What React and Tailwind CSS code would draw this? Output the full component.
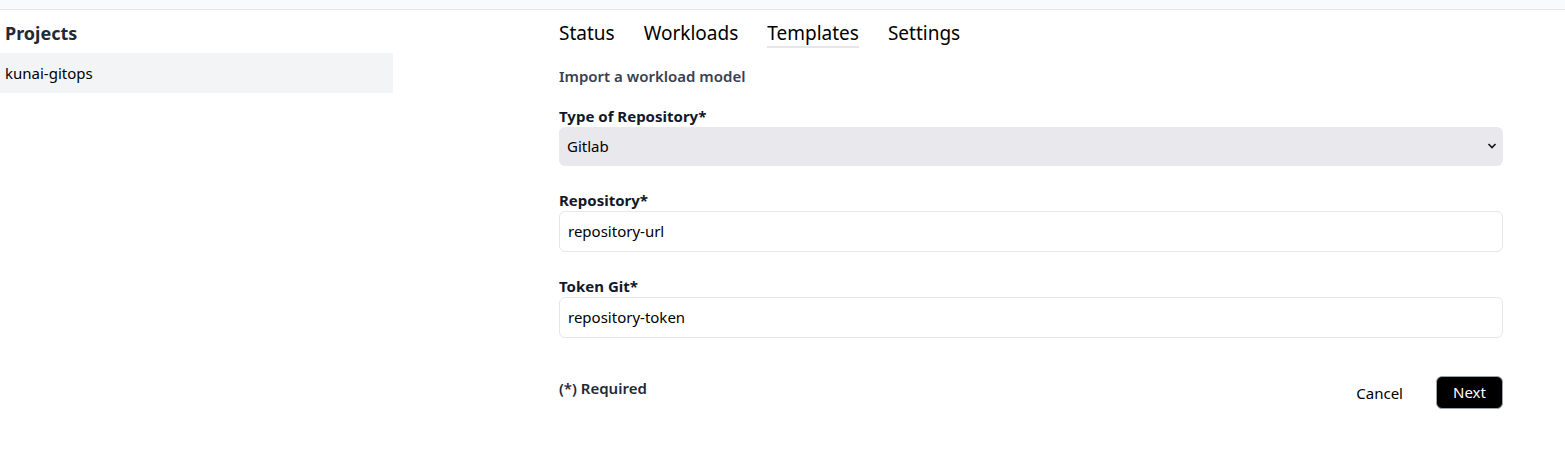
import React from "react";

const tabs = ["Status", "Workloads", "Templates", "Settings"];

function Field({ label, children }) {
  return (
    <div className="flex flex-col">
      <label className="text-[15px] font-bold text-[#111827] leading-5 mb-[1px]">{label}</label>
      {children}
    </div>
  );
}

export default function App() {
  return (
    <div
      className="min-h-screen bg-white text-black"
      style={{ fontFamily: '"Noto Sans", "Open Sans", sans-serif' }}
    >
      {/* top bar */}
      <div className="h-[10px] bg-[#f9fafb] border-b border-[#e5e7eb]" />

      <div className="flex">
        {/* sidebar */}
        <aside className="w-[393px] shrink-0">
          <h2 className="px-[5px] pt-[11px] pb-[8px] text-[18px] font-bold leading-6 text-[#1f2937]">Projects</h2>
          <div className="h-[40px] bg-[#f3f4f6] px-[5px] flex items-center text-[15px] text-black">
            kunai-gitops
          </div>
        </aside>

        {/* main */}
        <main className="flex-1 pl-[166px] pr-[62px]">
          <nav className="flex gap-[29px] pt-[11px]">
            {tabs.map((t) => (
              <div
                key={t}
                className={
                  t === "Templates"
                    ? "text-[19px] leading-6 pb-[1px] border-b-2 border-[#e5e7eb]"
                    : "text-[19px] leading-6 pb-[1px] border-b-2 border-transparent"
                }
              >
                {t}
              </div>
            ))}
          </nav>

          <p className="mt-[18px] text-[15px] font-semibold text-[#374151] leading-5">Import a workload model</p>

          <div className="mt-[20px] flex flex-col gap-[24px]">
            <Field label="Type of Repository*">
              <div className="relative h-[39px] rounded-md bg-[#e9e8ed] flex items-center px-[8px] text-[15px]">
                Gitlab
                <svg className="absolute right-[6px] top-[15px]" width="10" height="8" viewBox="0 0 10 8">
                  <path d="M1.5 2 L5 5.5 L8.5 2" fill="none" stroke="#111" strokeWidth="1.6" />
                </svg>
              </div>
            </Field>
            <Field label="Repository*">
              <div className="h-[41px] rounded-md border border-[#e5e7eb] flex items-center px-[8px] text-[15px]">
                repository-url
              </div>
            </Field>
            <Field label="Token Git*">
              <div className="h-[41px] rounded-md border border-[#e5e7eb] flex items-center px-[8px] text-[15px]">
                repository-token
              </div>
            </Field>
          </div>

          <div className="mt-[38px] flex justify-between items-start">
            <p className="text-[15px] font-semibold text-[#1f2937] leading-5 mt-[2px]">(*) Required</p>
            <div className="flex items-center gap-[33px]">
              <button className="text-[15px] mt-[2px]">Cancel</button>
              <button className="h-[33px] w-[67px] rounded-md bg-black text-white text-[15px] border border-[#9ca3af]">
                Next
              </button>
            </div>
          </div>
        </main>
      </div>
    </div>
  );
}
